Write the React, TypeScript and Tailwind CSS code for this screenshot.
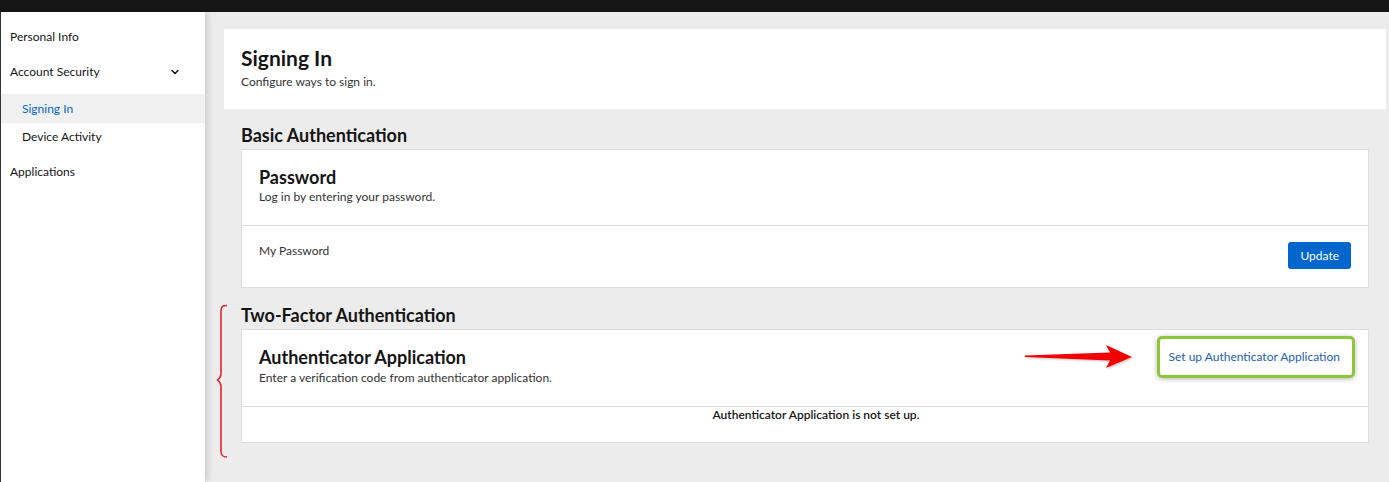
import { ChevronDown } from 'lucide-react'

const font = { fontFamily: 'Lato, "Liberation Sans", sans-serif' }

function Sidebar() {
  return (
    <aside className="relative z-10 w-[205px] shrink-0 bg-white border-l border-[#333] shadow-[3px_0_6px_rgba(0,0,0,0.12)] pt-[7px] text-[12px] text-[#151515]">
      <div className="h-[35px] flex items-center pl-[9px]">Personal Info</div>
      <div className="h-[35px] flex items-center justify-between pl-[9px] pr-[24px]">
        <span>Account Security</span>
        <ChevronDown className="w-[12px] h-[12px]" strokeWidth={3} />
      </div>
      <div className="h-[29px] mt-[5px] flex items-center pl-[21px] bg-[#f0f0f0] text-[#0066cc]">Signing In</div>
      <div className="h-[28px] flex items-center pl-[21px]">Device Activity</div>
      <div className="h-[42px] flex items-center pl-[9px]">Applications</div>
    </aside>
  )
}

function Arrow() {
  return (
    <svg className="absolute left-[780px] top-[13px]" width="114" height="28" viewBox="0 0 114 28">
      <defs>
        <filter id="as" x="-10%" y="-30%" width="120%" height="160%">
          <feDropShadow dx="1" dy="1" stdDeviation="1" floodColor="#000" floodOpacity="0.25" />
        </filter>
      </defs>
      <path d="M3 12.5 L88 9.5 L84 2 L110 14 L84 25 L88 17.5 L3 14 Z" fill="#f20000" filter="url(#as)" />
    </svg>
  )
}

function Bracket() {
  return (
    <svg className="absolute left-[-25px] top-[1px]" width="14" height="155" viewBox="0 0 14 155">
      <path
        d="M11 1.5 C6 1.5 5 3 5 7 L5 70 C5 73 4 74 1.5 76 C4 78 5 79 5 82 L5 147 C5 151 6 153 11 153"
        fill="none"
        stroke="#e3262e"
        strokeWidth="1.6"
      />
    </svg>
  )
}

export default function App() {
  return (
    <div className="w-[1389px] h-[482px] overflow-hidden flex flex-col bg-[#151515]" style={font}>
      <div className="h-[12px] shrink-0 bg-[#151515]" />
      <div className="flex flex-1 min-h-0">
        <Sidebar />
        <main className="flex-1 bg-[#ececec] pt-[17px] pl-[19px] pr-[3px] text-[#151515]">
          {/* Header */}
          <section className="bg-white h-[80px] px-[17px] pt-[17px]">
            <h1 className="text-[21px] leading-[24px] font-bold">Signing In</h1>
            <p className="mt-[4px] text-[12px] leading-[16px] text-[#333]">Configure ways to sign in.</p>
          </section>

          <div className="px-[17px]">
            {/* Basic */}
            <h2 className="mt-[14px] text-[18px] leading-[24px] font-bold">Basic Authentication</h2>
            <div className="mt-[2px] bg-white border border-[#dedede]">
              <div className="px-[17px] pt-[15px] pb-[20px] border-b border-[#dedede]">
                <h3 className="text-[18px] leading-[24px] font-bold">Password</h3>
                <p className="text-[12px] leading-[16px] text-[#333]">Log in by entering your password.</p>
              </div>
              <div className="h-[61px] px-[17px] pt-[16px] flex items-start justify-between">
                <span className="mt-[1px] text-[12px] leading-[16px] text-[#333]">My Password</span>
                <button className="h-[27px] px-[12px] rounded-[3px] bg-[#0066cc] text-white text-[12px]">Update</button>
              </div>
            </div>

            {/* Two-factor */}
            <div className="relative mt-[15px]">
              <Bracket />
              <h2 className="text-[18px] leading-[24px] font-bold">Two-Factor Authentication</h2>
              <div className="mt-[2px] bg-white border border-[#dedede]">
                <div className="relative px-[17px] pt-[6px] pb-[20px] border-b border-[#dedede] flex items-start justify-between">
                  <div className="pt-[9px]">
                    <h3 className="text-[18px] leading-[24px] font-bold">Authenticator Application</h3>
                    <p className="mt-[1px] text-[12px] leading-[16px] text-[#333]">Enter a verification code from authenticator application.</p>
                  </div>
                  <Arrow />
                  <div className="mr-[-4px] h-[42px] pl-[9px] pr-[12px] flex items-center rounded-[5px] border-[3px] border-[#8cc63f] shadow-[0_1px_5px_rgba(0,0,0,0.3)]">
                    <a className="text-[12px] text-[#2660b0]">Set up Authenticator Application</a>
                  </div>
                </div>
                <div className="h-[35px] text-center text-[12px] leading-[16px] font-semibold pl-[22px]">
                  Authenticator Application is not set up.
                </div>
              </div>
            </div>
          </div>
        </main>
      </div>
    </div>
  )
}
